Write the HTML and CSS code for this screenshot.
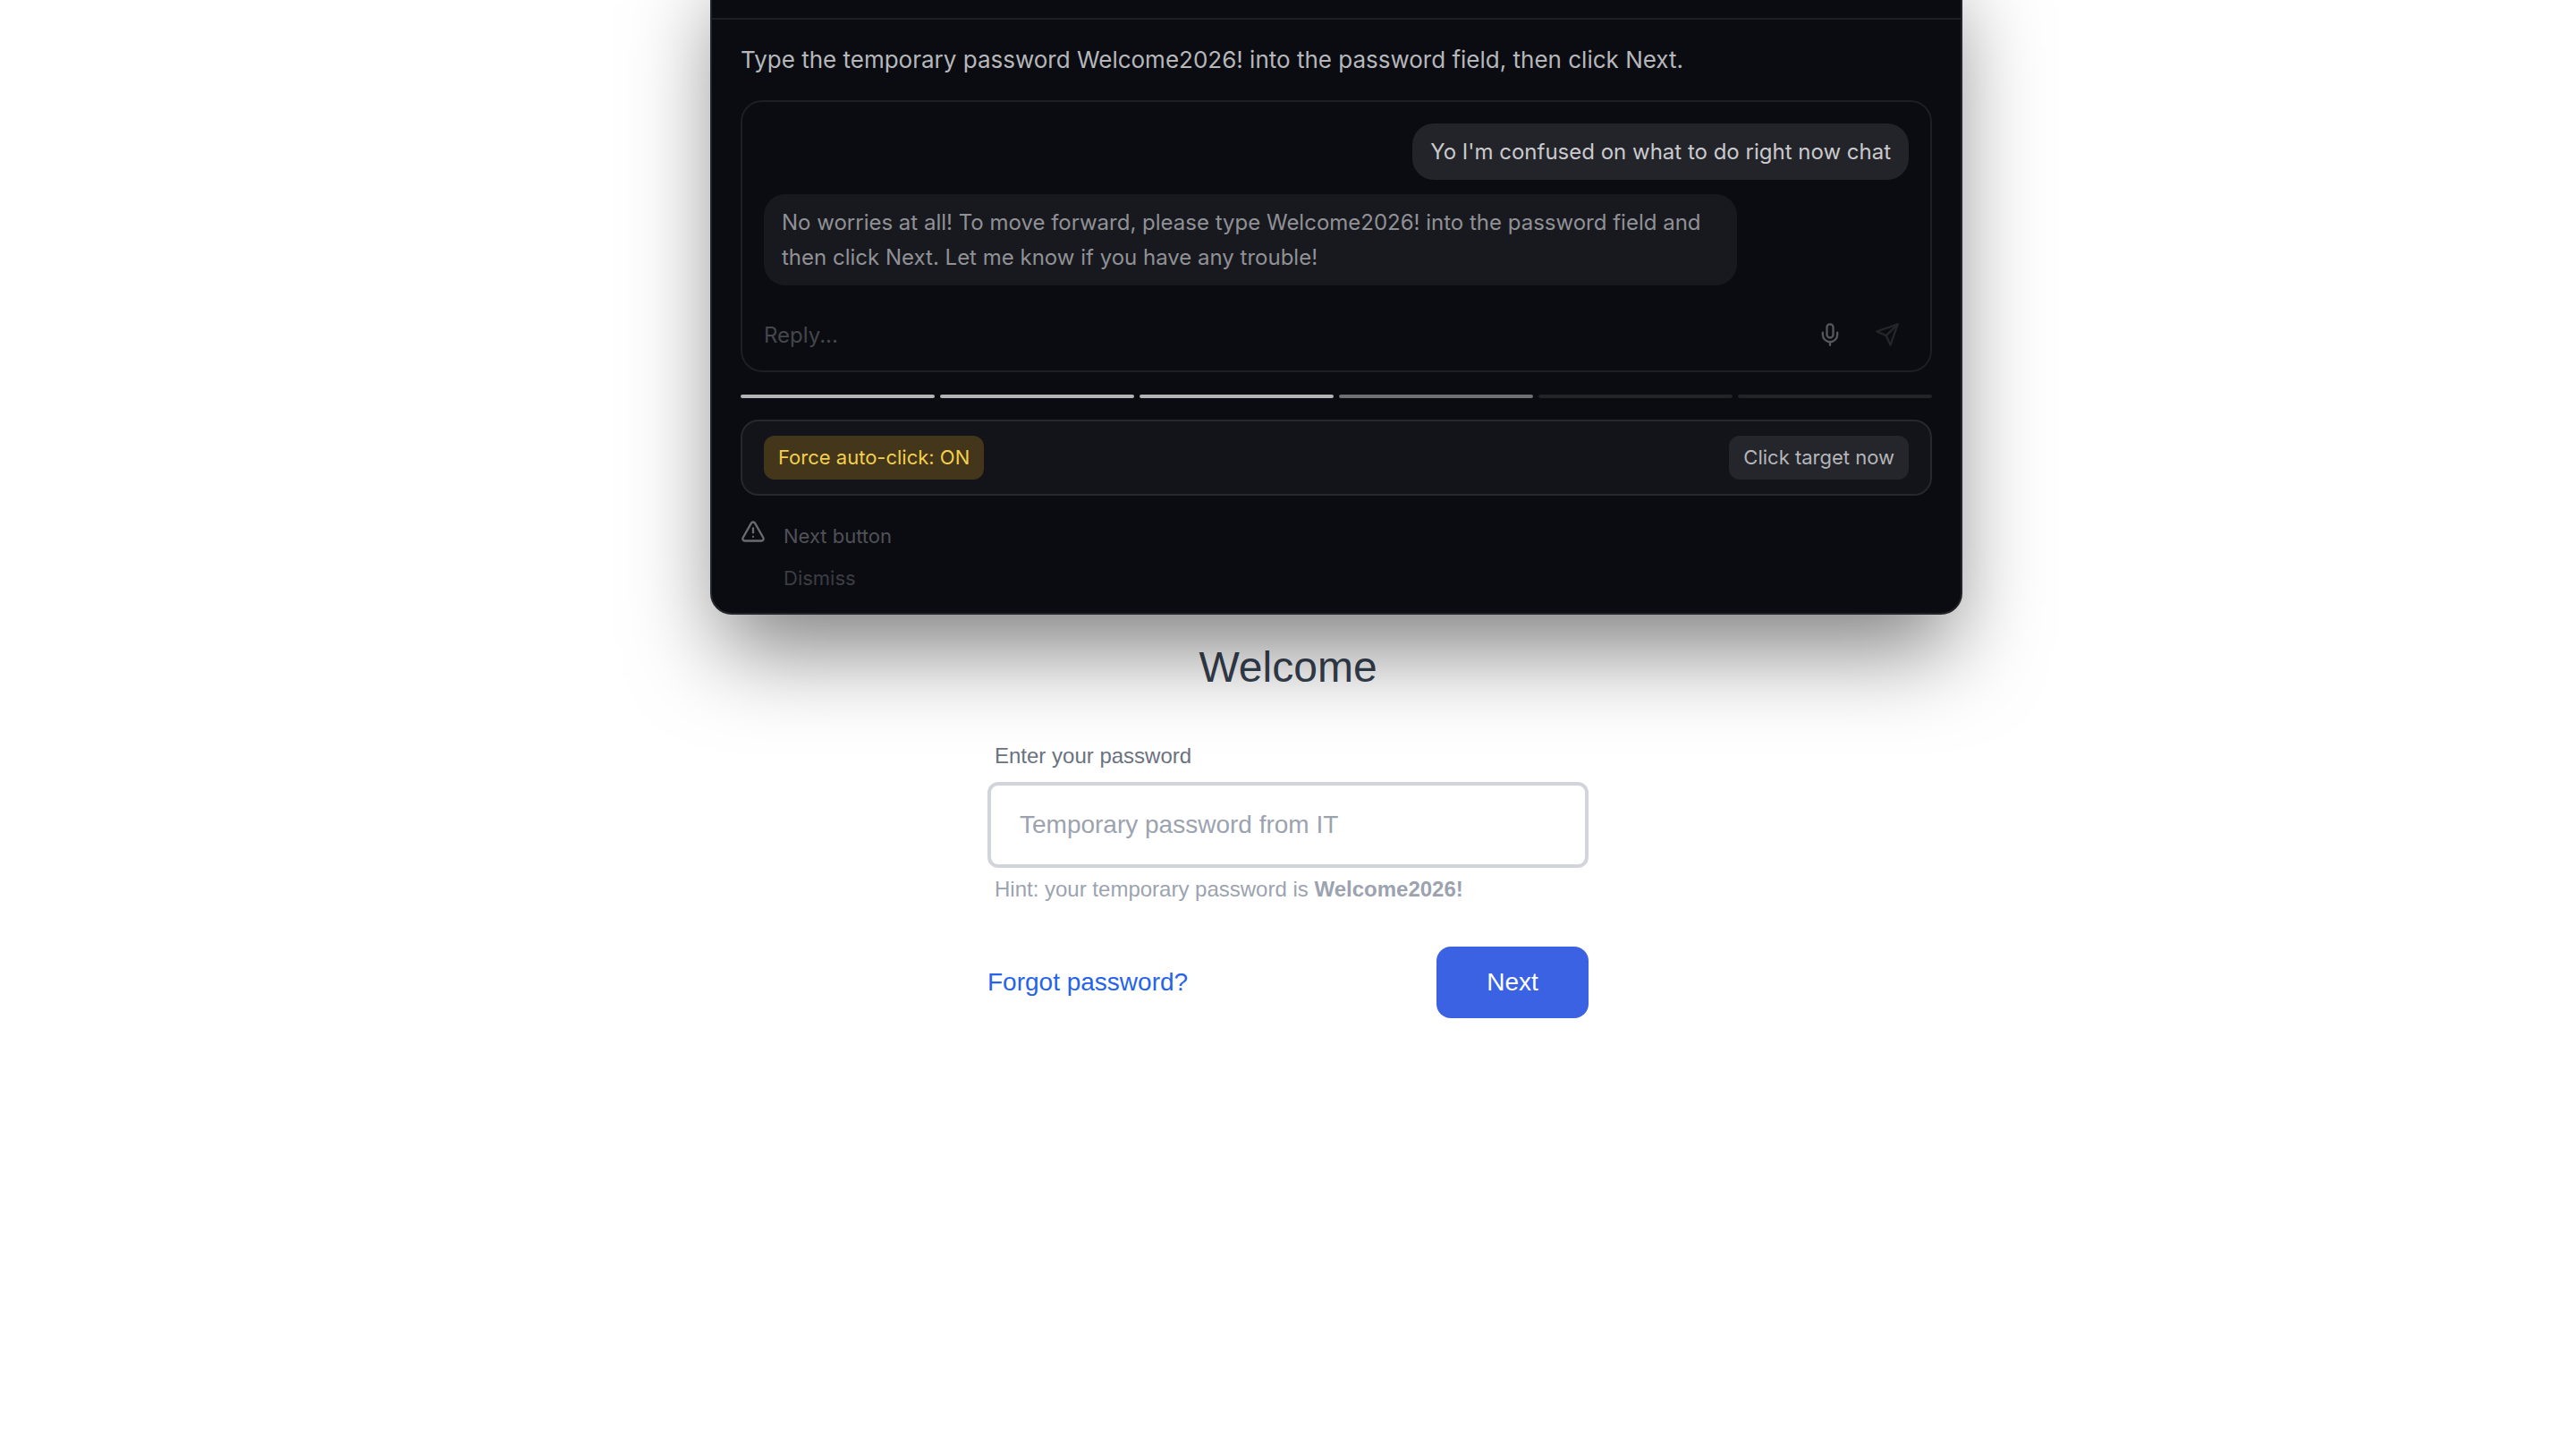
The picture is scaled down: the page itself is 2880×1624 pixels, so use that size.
FILE: index.html
```html
<!DOCTYPE html>
<html lang="en">
  <head>
    <meta charset="UTF-8" />
    <title>Welcome</title>
    <link rel="stylesheet" href="styles.css">
  </head>
  <body>
    <!-- Sign in form under the overlay -->
    <main class="signin">
      <h1>Welcome</h1>
      <label class="field-label" for="password">Enter your password</label>
      <input class="field-input" id="password" type="text" placeholder="Temporary password from IT" />
      <p class="field-hint">Hint: your temporary password is <strong>Welcome2026!</strong></p>
      <div class="signin-actions">
        <a href="#" class="forgot">Forgot password?</a>
        <button class="next">Next</button>
      </div>
    </main>

    <!-- Floating coach panel, its top runs off the page -->
    <aside class="coach">
      <div class="coach-header"></div>
      <div class="coach-body">
        <p class="instruction">Type the temporary password Welcome2026! into the password field, then click Next.</p>

        <div class="chat">
          <div class="bubble user">Yo I'm confused on what to do right now chat</div>
          <div class="bubble assistant">No worries at all! To move forward, please type Welcome2026! into the password field and then click Next. Let me know if you have any trouble!</div>
          <div class="reply">
            <span class="reply-text">Reply...</span>
            <button class="icon-btn mic" aria-label="Voice">
              <svg viewBox="0 0 24 24"><path d="M12 2a3 3 0 0 0-3 3v7a3 3 0 0 0 6 0V5a3 3 0 0 0-3-3Z"/><path d="M19 10v2a7 7 0 0 1-14 0v-2"/><path d="M12 19v3"/></svg>
            </button>
            <button class="icon-btn send" aria-label="Send">
              <svg viewBox="0 0 24 24"><path d="m22 2-7 20-4-9-9-4Z"/><path d="M22 2 11 13"/></svg>
            </button>
          </div>
        </div>

        <div class="progress">
          <span class="step done"></span>
          <span class="step done"></span>
          <span class="step done"></span>
          <span class="step current"></span>
          <span class="step"></span>
          <span class="step"></span>
        </div>

        <div class="controls">
          <span class="force">Force auto-click: ON</span>
          <button class="click-now">Click target now</button>
        </div>

        <div class="notice">
          <svg class="notice-icon" viewBox="0 0 24 24"><path d="m21.73 18-8-14a2 2 0 0 0-3.48 0l-8 14A2 2 0 0 0 4 21h16a2 2 0 0 0 1.73-3Z"/><path d="M12 9v4"/><path d="M12 17h.01"/></svg>
          <div class="notice-text">
            <span class="notice-target">Next button</span>
            <span class="notice-dismiss">Dismiss</span>
          </div>
        </div>
      </div>
    </aside>
  </body>
</html>
```

FILE: styles.css
```css
* {
  box-sizing: border-box;
}

html, body {
  margin: 0;
  height: 100%;
}

body {
  background-color: #fff;
  font-family: "Liberation Sans", Arial, sans-serif;
  overflow: hidden;
  position: relative;
}

/* Sign in form */
.signin {
  width: 672px;
  margin: 0 auto;
  padding-top: 712px;
  display: flex;
  flex-direction: column;
}

.signin h1 {
  margin: 0 0 50px;
  font-size: 48px;
  line-height: 68px;
  font-weight: 400;
  color: #374151;
  text-align: center;
}

.field-label {
  padding-left: 8px;
  margin-bottom: 14px;
  font-size: 24px;
  line-height: 30px;
  color: #6b7280;
}

.field-input {
  height: 96px;
  padding: 0 32px;
  border: 4px solid #d1d5db;
  border-radius: 12px;
  font-family: inherit;
  font-size: 28px;
  background: #fff;
  outline: none;
}

.field-input::placeholder {
  color: #9ca3af;
  opacity: 1;
}

.field-hint {
  margin: 9px 0 0;
  padding-left: 8px;
  font-size: 24px;
  line-height: 30px;
  color: #9ca3af;
}

.signin-actions {
  margin-top: 49px;
  display: flex;
  justify-content: space-between;
  align-items: center;
}

.forgot {
  font-size: 28px;
  color: #2563eb;
  text-decoration: none;
}

.next {
  width: 170px;
  height: 80px;
  border: none;
  border-radius: 16px;
  background-color: #3b62e3;
  color: #fff;
  font-family: inherit;
  font-size: 28px;
}

/* Coach panel */
.coach {
  position: absolute;
  left: 794px;
  bottom: 937px;
  width: 1400px;
  height: 747px;
  background-color: #0a0c11;
  border: 2px solid #24252b;
  border-radius: 24px;
  box-shadow: 0 50px 100px -12px rgba(0, 0, 0, 0.5);
  font-family: Inter, "Liberation Sans", sans-serif;
  display: flex;
  flex-direction: column;
  justify-content: flex-end;
}

.coach-header {
  height: 2px;
  background-color: #1d1f24;
}

.coach-body {
  padding: 24px 32px 21px;
}

.instruction {
  margin: 0 0 24px;
  font-size: 26px;
  line-height: 42px;
  color: #b6b7bb;
}

.chat {
  padding: 24px 24px 18px;
  border: 2px solid #1d1f24;
  border-radius: 24px;
  display: flex;
  flex-direction: column;
}

.bubble {
  padding: 12px 20px;
  border-radius: 24px;
  font-size: 24px;
  line-height: 39px;
}

.bubble.user {
  align-self: flex-end;
  background-color: #232429;
  color: #c9cacd;
}

.bubble.assistant {
  align-self: flex-start;
  max-width: 85%;
  margin-top: 16px;
  background-color: #18191e;
  color: #909196;
}

.reply {
  height: 44px;
  margin-top: 33px;
  padding-right: 2px;
  display: flex;
  align-items: center;
  gap: 20px;
}

.reply-text {
  flex: 1;
  font-size: 24px;
  color: #45464c;
}

.icon-btn {
  width: 44px;
  height: 44px;
  padding: 0;
  border: none;
  background: none;
  display: flex;
  justify-content: center;
  align-items: center;
}

.icon-btn svg,
.notice-icon {
  width: 28px;
  height: 28px;
  fill: none;
  stroke: currentColor;
  stroke-width: 2;
  stroke-linecap: round;
  stroke-linejoin: round;
}

.mic {
  color: #56575c;
}

.send {
  color: #25262a;
}

/* Step bars */
.progress {
  margin: 25px 0 24px;
  display: grid;
  grid-template-columns: repeat(6, 1fr);
  gap: 6px;
}

.step {
  height: 4px;
  border-radius: 2px;
  background-color: #232428;
}

.step.done {
  background-color: #b4b4b6;
}

.step.current {
  background-color: #6f7074;
}

.controls {
  padding: 16px 24px;
  background-color: #12141a;
  border: 2px solid #26282d;
  border-radius: 20px;
  display: flex;
  justify-content: space-between;
  align-items: center;
}

.force,
.click-now {
  height: 49px;
  padding: 0 16px;
  border: none;
  border-radius: 12px;
  font-family: inherit;
  font-size: 22px;
  line-height: 49px;
}

.force {
  background-color: #44361a;
  color: #f2cf4d;
}

.click-now {
  background-color: #25262b;
  color: #b4b5b9;
}

.notice {
  margin-top: 24px;
  display: flex;
  gap: 20px;
}

.notice-icon {
  margin-top: 2px;
  color: #6a6b70;
}

.notice-text {
  padding-top: 3px;
  display: flex;
  flex-direction: column;
  gap: 11px;
  font-size: 22px;
  line-height: 36px;
}

.notice-target {
  color: #505157;
}

.notice-dismiss {
  color: #3c3d43;
}
```
